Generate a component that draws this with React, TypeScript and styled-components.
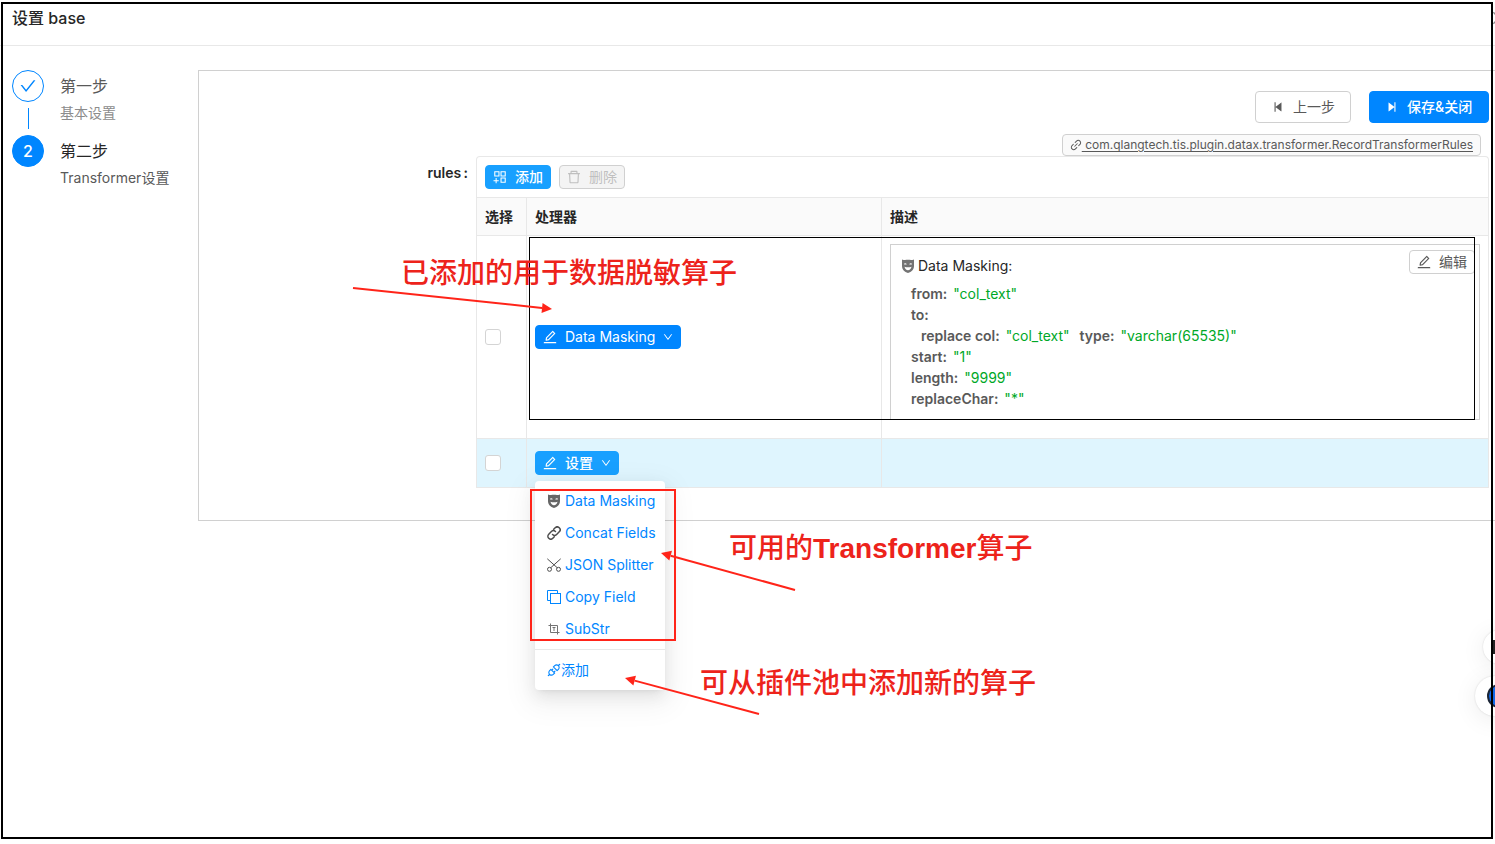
import React from 'react';
import styled, { createGlobalStyle, css } from 'styled-components';
import {
  AiOutlineCheck,
  AiOutlineStepBackward,
  AiOutlineStepForward,
  AiOutlineLink,
  AiOutlineAppstoreAdd,
  AiOutlineDelete,
  AiOutlineEdit,
  AiOutlineDown,
  AiOutlineApi,
  AiOutlineClose,
} from 'react-icons/ai';

const color = {
  primary: '#0086ff',
  hover: '#18a0ff',
  text: '#262626',
  body: '#595959',
  muted: '#8c8c8c',
  line: '#e8e8e8',
  border: '#d0d0d0',
  red: '#ff2419',
  note: '#ed231b',
};

/* Trims the empty margin that the icon set keeps round its glyphs. */
const tight = { viewBox: '64 64 896 896' };

const GlobalStyle = createGlobalStyle`
  *, *::before, *::after { box-sizing: border-box; }
  body {
    margin: 0;
    background: #fff;
    color: ${color.body};
    font: 400 14px/22px Inter, "Noto Sans CJK SC", sans-serif;
  }
  button, input { font: inherit; }
`;

const Page = styled.div`
  position: relative;
  min-height: 100vh;
  overflow: hidden;
`;

const TopBar = styled.header`
  display: flex;
  align-items: center;
  justify-content: space-between;
  height: 46px;
  padding: 0 0 10px 12px;
  border-bottom: 1px solid ${color.line};
`;

const Title = styled.h1`
  margin: 0;
  font-size: 16px;
  font-weight: 500;
  line-height: 22px;
  color: ${color.text};
`;

const CloseButton = styled.button`
  display: flex;
  margin-right: -12px;
  padding: 0;
  border: 0;
  background: none;
  color: ${color.muted};
  font-size: 16px;
`;

const Body = styled.div`
  display: flex;
  padding: 24px 0 24px 12px;
`;

const Steps = styled.ol`
  flex: 0 0 186px;
  margin: 0;
  padding: 0;
  list-style: none;
`;

const Step = styled.li`
  display: flex;
  gap: 16px;
  min-height: 65px;
`;

const StepTrack = styled.div`
  display: flex;
  flex-direction: column;
  align-items: center;
  gap: 6px;
  padding-bottom: 6px;
`;

const StepIcon = styled.span<{ $active?: boolean }>`
  display: flex;
  align-items: center;
  justify-content: center;
  width: 32px;
  height: 32px;
  border: 1px solid ${color.primary};
  border-radius: 50%;
  background: ${(p) => (p.$active ? color.primary : '#fff')};
  color: ${(p) => (p.$active ? '#fff' : color.primary)};
  font-size: 16px;
  font-weight: 500;
`;

const StepLine = styled.span`
  flex: 1;
  width: 1px;
  background: ${color.primary};
`;

const StepTitle = styled.div<{ $active?: boolean }>`
  font-size: 16px;
  line-height: 32px;
  color: ${(p) => (p.$active ? color.text : color.body)};
`;

const StepText = styled.div<{ $active?: boolean }>`
  color: ${(p) => (p.$active ? color.body : color.muted)};
`;

const Panel = styled.main`
  flex: 1;
  min-width: 0;
  padding: 20px 6px 32px 0;
  border: 1px solid ${color.border};
  border-right: 0;
`;

const Actions = styled.div`
  display: flex;
  justify-content: flex-end;
  gap: 18px;
`;

type ButtonKind = 'default' | 'primary' | 'hover';

const fills: Record<ButtonKind, ReturnType<typeof css>> = {
  default: css`
    border-color: ${color.border};
    background: #fff;
    color: ${color.body};
  `,
  primary: css`
    border-color: ${color.primary};
    background: ${color.primary};
    color: #fff;
  `,
  hover: css`
    border-color: ${color.hover};
    background: ${color.hover};
    color: #fff;
    font-weight: 500;
  `,
};

const Button = styled.button<{ $kind?: ButtonKind; $small?: boolean }>`
  display: inline-flex;
  align-items: center;
  gap: 8px;
  height: ${(p) => (p.$small ? 24 : 32)}px;
  padding: 0 ${(p) => (p.$small ? 7 : 15)}px;
  border: 1px solid;
  border-radius: 4px;
  line-height: 22px;
  white-space: nowrap;
  ${(p) => fills[p.$kind ?? 'default']}

  &:disabled {
    border-color: ${color.border};
    background: #f4f4f4;
    color: #bfbfbf;
  }
`;

const SaveButton = styled(Button)`
  min-width: 120px;
  font-weight: 500;
`;

const FormItem = styled.div`
  display: grid;
  grid-template-columns: 277px minmax(0, 1fr);
  margin-top: 11px;
`;

const FormLabel = styled.div`
  padding: 28px 8px 0 0;
  text-align: right;
  font-weight: 600;
  color: ${color.text};
`;

const TagRow = styled.div`
  display: flex;
  justify-content: flex-end;
  padding-right: 8px;
`;

const ClassTag = styled.a`
  display: flex;
  align-items: center;
  height: 22px;
  padding: 0 7px;
  border: 1px solid ${color.border};
  border-radius: 4px;
  background: #fafafa;
  color: ${color.body};
  font-size: 12px;
  line-height: 20px;
  text-decoration: none;
  white-space: pre;

  span {
    text-decoration: underline;
    text-underline-offset: 2px;
  }
`;

const TableBox = styled.section`
  border: 1px solid ${color.line};
  border-bottom: 0;
  border-radius: 4px 4px 0 0;
`;

const Toolbar = styled.div`
  display: flex;
  gap: 8px;
  padding: 8px;
`;

const Table = styled.table`
  width: 100%;
  table-layout: fixed;
  border-collapse: separate;
  border-spacing: 0;
`;

const HeadCell = styled.th<{ $width?: string }>`
  width: ${(p) => p.$width ?? 'auto'};
  height: 39px;
  padding: 0 8px;
  border: solid ${color.line};
  border-width: 1px 1px 1px 0;
  background: #fafafa;
  color: ${color.text};
  font-weight: 600;
  text-align: left;

  &:last-child {
    border-right: 0;
  }
`;

const Row = styled.tr<{ $selected?: boolean }>`
  background: ${(p) => (p.$selected ? '#dff5fe' : '#fff')};
`;

const Cell = styled.td<{ $tall?: boolean }>`
  height: ${(p) => (p.$tall ? 203 : 49)}px;
  padding: 8px;
  border: solid ${color.line};
  border-width: 0 1px 1px 0;
  vertical-align: middle;

  &:last-child {
    padding-bottom: ${(p) => (p.$tall ? 18 : 8)}px;
    border-right: 0;
  }
`;

const Checkbox = styled.input.attrs({ type: 'checkbox' })`
  display: block;
  appearance: none;
  width: 16px;
  height: 16px;
  margin: 0;
  border: 1px solid #d4d4d4;
  border-radius: 3px;
  background: #fff;
`;

const Card = styled.article`
  padding: 5px 4px 10px 10px;
  border: 1px solid ${color.border};
`;

const CardHead = styled.div`
  display: flex;
  align-items: flex-start;
  justify-content: space-between;
  margin-bottom: 6px;
`;

const CardTitle = styled.h2`
  display: flex;
  align-items: center;
  gap: 3px;
  margin: 5px 0 0;
  color: ${color.text};
  font-size: 14px;
  font-weight: 400;
  line-height: 22px;

  svg {
    color: #737373;
  }
`;

const Props = styled.ul`
  margin: 0 0 0 10px;
  padding: 0;
  list-style: none;
  line-height: 21px;
`;

const PropLine = styled.li`
  b {
    margin-right: 6px;
    font-weight: 600;
  }
`;

const Value = styled.span`
  margin-right: 10px;
  color: #00a827;
`;

const Dropdown = styled.div`
  position: relative;
  display: flex;
`;

const Menu = styled.div`
  position: absolute;
  z-index: 2;
  top: 30px;
  left: 0;
  width: 130px;
  padding: 4px 0;
  border-radius: 4px;
  background: #fff;
  box-shadow: 0 3px 6px -4px rgba(0, 0, 0, 0.12), 0 6px 16px rgba(0, 0, 0, 0.08), 0 9px 28px 8px rgba(0, 0, 0, 0.05);
`;

const MenuItem = styled.a<{ $tight?: boolean; $iconColor?: string }>`
  display: flex;
  align-items: center;
  gap: ${(p) => (p.$tight ? 0 : 4)}px;
  padding: 5px 12px;
  color: ${color.primary};
  text-decoration: none;
  white-space: nowrap;

  svg {
    flex: none;
    color: ${(p) => p.$iconColor ?? 'inherit'};
  }
`;

const Divider = styled.hr`
  height: 1px;
  margin: 4px 0;
  border: 0;
  background: ${color.line};
`;

const FloatButton = styled.button<{ $size: number; $top: number }>`
  position: absolute;
  top: ${(p) => p.$top}px;
  right: ${(p) => (p.$size === 40 ? -20 : -22)}px;
  display: flex;
  align-items: center;
  justify-content: center;
  width: ${(p) => p.$size}px;
  height: ${(p) => p.$size}px;
  padding: 0;
  border: 0;
  border-radius: 50%;
  background: #fff;
  box-shadow: 0 0 2px rgba(0, 0, 0, 0.15), 0 4px 24px rgba(0, 0, 0, 0.08);
`;

const AssistantIcon = styled.svg`
  margin-left: 8px;
`;

const Frame = styled.div`
  position: absolute;
  z-index: 3;
  inset: 2px 2px 5px 1px;
  border: 2px solid #000;
  pointer-events: none;
`;

const Outline = styled.div<{ $x: number; $y: number; $w: number; $h: number; $red?: boolean }>`
  position: absolute;
  z-index: 3;
  left: ${(p) => p.$x}px;
  top: ${(p) => p.$y}px;
  width: ${(p) => p.$w}px;
  height: ${(p) => p.$h}px;
  border: ${(p) => (p.$red ? `2px solid ${color.red}` : '1px solid #000')};
  pointer-events: none;
`;

const Note = styled.p<{ $x: number; $y: number }>`
  position: absolute;
  z-index: 3;
  left: ${(p) => p.$x}px;
  top: ${(p) => p.$y}px;
  margin: 0;
  color: ${color.note};
  font: 500 28px/36px "Liberation Sans", "Noto Sans CJK SC", sans-serif;
  white-space: nowrap;
  pointer-events: none;

  b {
    font-weight: 700;
  }
`;

const ArrowLayer = styled.svg`
  position: absolute;
  z-index: 3;
  inset: 0;
  width: 100%;
  height: 100%;
  pointer-events: none;
`;

function Arrow({ from, to }: { from: [number, number]; to: [number, number] }) {
  const dx = to[0] - from[0];
  const dy = to[1] - from[1];
  const len = Math.hypot(dx, dy);
  const [ux, uy] = [dx / len, dy / len];
  const bx = to[0] - ux * 10;
  const by = to[1] - uy * 10;
  return (
    <g stroke="none" fill={color.red}>
      <line x1={from[0]} y1={from[1]} x2={bx} y2={by} stroke={color.red} strokeWidth={2} />
      <polygon points={`${to[0]},${to[1]} ${bx - uy * 5},${by + ux * 5} ${bx + uy * 5},${by - ux * 5}`} />
    </g>
  );
}

const MaskIcon = () => (
  <svg width="14" height="14" viewBox="0 0 14 14" aria-hidden="true">
    <path
      fill="currentColor"
      fillRule="evenodd"
      d="M1 .4C3 1.200 5 .8 7 .8S11 1.200 13 .4V7c0 3.500-2.500 5.900-6 7C3.500 12.900 1 10.500 1 7ZM2.800 4.900c.5.9 2.400.9 3 .3C5.300 4.200 3.700 3.900 2.800 4.900ZM11.200 4.900c-.5.9-2.400.9-3 .3.500-1 2.100-1.300 3-.3ZM3.500 7.800C4 10.200 5.300 11.200 7 11.200s3-1 3.500-3.400C8.500 8.500 5.500 8.500 3.500 7.800Z"
    />
  </svg>
);

const ChainIcon = () => (
  <svg width="14" height="14" viewBox="0 0 24 24" fill="none" stroke="currentColor" strokeWidth="2.600" strokeLinecap="round" aria-hidden="true">
    <path d="M9.500 14.500a5 5 0 0 0 7 0l4.500-4.500a4.900 4.900 0 0 0-7-7l-2.500 2.500" />
    <path d="M14.500 9.500a5 5 0 0 0-7 0L3 14a4.900 4.900 0 0 0 7 7l2.500-2.500" />
  </svg>
);

const ScissorIcon = () => (
  <svg width="14" height="14" viewBox="0 0 14 14" fill="none" stroke="currentColor" aria-hidden="true">
    <path d="M.3.8l9.900 8.900M13.700.8L3.800 9.700" />
    <circle cx="2.500" cy="11.300" r="2" />
    <circle cx="11.500" cy="11.300" r="2" />
  </svg>
);

const CopyIcon = () => (
  <svg width="14" height="14" viewBox="0 0 14 14" fill="none" stroke="currentColor" aria-hidden="true">
    <rect x="3.500" y="3.500" width="10" height="10" />
    <path d="M3.500 10.500h-3V.5h10v3" />
  </svg>
);

const CropTextIcon = () => (
  <svg width="14" height="14" viewBox="0 0 14 14" fill="none" stroke="currentColor" aria-hidden="true">
    <path d="M3.500 1.500v9h9M1.500 3.500h9v9" />
    <path d="M5.500 5.500h3M7 5.500V9" />
  </svg>
);

export default function App() {
  return (
    <Page>
      <GlobalStyle />
      <TopBar>
        <Title>设置 base</Title>
        <CloseButton aria-label="关闭">
          <AiOutlineClose {...tight} />
        </CloseButton>
      </TopBar>

      <Body>
        <Steps>
          <Step>
            <StepTrack>
              <StepIcon>
                <AiOutlineCheck {...tight} />
              </StepIcon>
              <StepLine />
            </StepTrack>
            <div>
              <StepTitle>第一步</StepTitle>
              <StepText>基本设置</StepText>
            </div>
          </Step>
          <Step>
            <StepTrack>
              <StepIcon $active>2</StepIcon>
            </StepTrack>
            <div>
              <StepTitle $active>第二步</StepTitle>
              <StepText $active>Transformer设置</StepText>
            </div>
          </Step>
        </Steps>

        <Panel>
          <Actions>
            <Button>
              <AiOutlineStepBackward size={14} />
              上一步
            </Button>
            <SaveButton $kind="primary">
              <AiOutlineStepForward size={14} />
              保存&amp;关闭
            </SaveButton>
          </Actions>

          <FormItem>
            <FormLabel>rules&thinsp;:</FormLabel>
            <div>
              <TagRow>
                <ClassTag href="#rules">
                  <AiOutlineLink size={12} {...tight} />
                  <span> com.qlangtech.tis.plugin.datax.transformer.RecordTransformerRules</span>
                </ClassTag>
              </TagRow>
              <TableBox>
                <Toolbar>
                  <Button $small $kind="hover">
                    <AiOutlineAppstoreAdd size={14} {...tight} />
                    添加
                  </Button>
                  <Button $small disabled>
                    <AiOutlineDelete size={14} {...tight} />
                    删除
                  </Button>
                </Toolbar>
                <Table>
                  <thead>
                    <tr>
                      <HeadCell $width="50px">选择</HeadCell>
                      <HeadCell $width="355px">处理器</HeadCell>
                      <HeadCell>描述</HeadCell>
                    </tr>
                  </thead>
                  <tbody>
                    <Row>
                      <Cell $tall>
                        <Checkbox aria-label="选择 Data Masking" />
                      </Cell>
                      <Cell $tall>
                        <Dropdown>
                          <Button $small $kind="primary">
                            <AiOutlineEdit size={14} {...tight} />
                            Data Masking
                            <AiOutlineDown size={10} {...tight} />
                          </Button>
                        </Dropdown>
                      </Cell>
                      <Cell $tall>
                        <Card>
                          <CardHead>
                            <CardTitle>
                              <MaskIcon />
                              Data Masking:
                            </CardTitle>
                            <Button $small>
                              <AiOutlineEdit size={14} {...tight} />
                              编辑
                            </Button>
                          </CardHead>
                          <Props>
                            <PropLine>
                              <b>from:</b>
                              <Value>"col_text"</Value>
                            </PropLine>
                            <PropLine>
                              <b>to:</b>
                              <Props>
                                <PropLine>
                                  <b>replace col:</b>
                                  <Value>"col_text"</Value>
                                  <b>type:</b>
                                  <Value>"varchar(65535)"</Value>
                                </PropLine>
                              </Props>
                            </PropLine>
                            <PropLine>
                              <b>start:</b>
                              <Value>"1"</Value>
                            </PropLine>
                            <PropLine>
                              <b>length:</b>
                              <Value>"9999"</Value>
                            </PropLine>
                            <PropLine>
                              <b>replaceChar:</b>
                              <Value>"*"</Value>
                            </PropLine>
                          </Props>
                        </Card>
                      </Cell>
                    </Row>
                    <Row $selected>
                      <Cell>
                        <Checkbox aria-label="选择新处理器" />
                      </Cell>
                      <Cell>
                        <Dropdown>
                          <Button $small $kind="hover">
                            <AiOutlineEdit size={14} {...tight} />
                            设置
                            <AiOutlineDown size={10} {...tight} />
                          </Button>
                          <Menu>
                            <MenuItem href="#mask" $iconColor="#666">
                              <MaskIcon />
                              Data Masking
                            </MenuItem>
                            <MenuItem href="#concat" $iconColor="#4d4d4d">
                              <ChainIcon />
                              Concat Fields
                            </MenuItem>
                            <MenuItem href="#json" $iconColor="#4d4d4d">
                              <ScissorIcon />
                              JSON Splitter
                            </MenuItem>
                            <MenuItem href="#copy">
                              <CopyIcon />
                              Copy Field
                            </MenuItem>
                            <MenuItem href="#substr" $iconColor="#737373">
                              <CropTextIcon />
                              SubStr
                            </MenuItem>
                            <Divider />
                            <MenuItem href="#add" $tight>
                              <AiOutlineApi size={14} {...tight} />
                              添加
                            </MenuItem>
                          </Menu>
                        </Dropdown>
                      </Cell>
                      <Cell />
                    </Row>
                  </tbody>
                </Table>
              </TableBox>
            </div>
          </FormItem>
        </Panel>
      </Body>

      <FloatButton $size={34} $top={630} aria-label="面板">
        <svg width="14" height="14" viewBox="0 0 14 14" fill="none" stroke="#222" strokeWidth="2" aria-hidden="true">
          <rect x="1" y="1" width="12" height="12" />
        </svg>
      </FloatButton>
      <FloatButton $size={40} $top={676} aria-label="助手">
        <AssistantIcon width="24" height="24" viewBox="0 0 24 24" aria-hidden="true">
          <circle cx="12" cy="12" r="11" fill="#1268e8" stroke="#1c2636" strokeWidth="2" />
        </AssistantIcon>
      </FloatButton>

      <Outline $x={529} $y={237} $w={946} $h={183} />
      <Outline $x={530} $y={489} $w={146} $h={152} $red />
      <ArrowLayer aria-hidden="true">
        <Arrow from={[353, 288]} to={[552, 309]} />
        <Arrow from={[795, 590]} to={[661, 553]} />
        <Arrow from={[759, 714]} to={[625, 678]} />
      </ArrowLayer>
      <Note $x={401} $y={256}>已添加的用于数据脱敏算子</Note>
      <Note $x={729} $y={531}>
        可用的<b>Transformer</b>算子
      </Note>
      <Note $x={700} $y={666}>可从插件池中添加新的算子</Note>
      <Frame />
    </Page>
  );
}
